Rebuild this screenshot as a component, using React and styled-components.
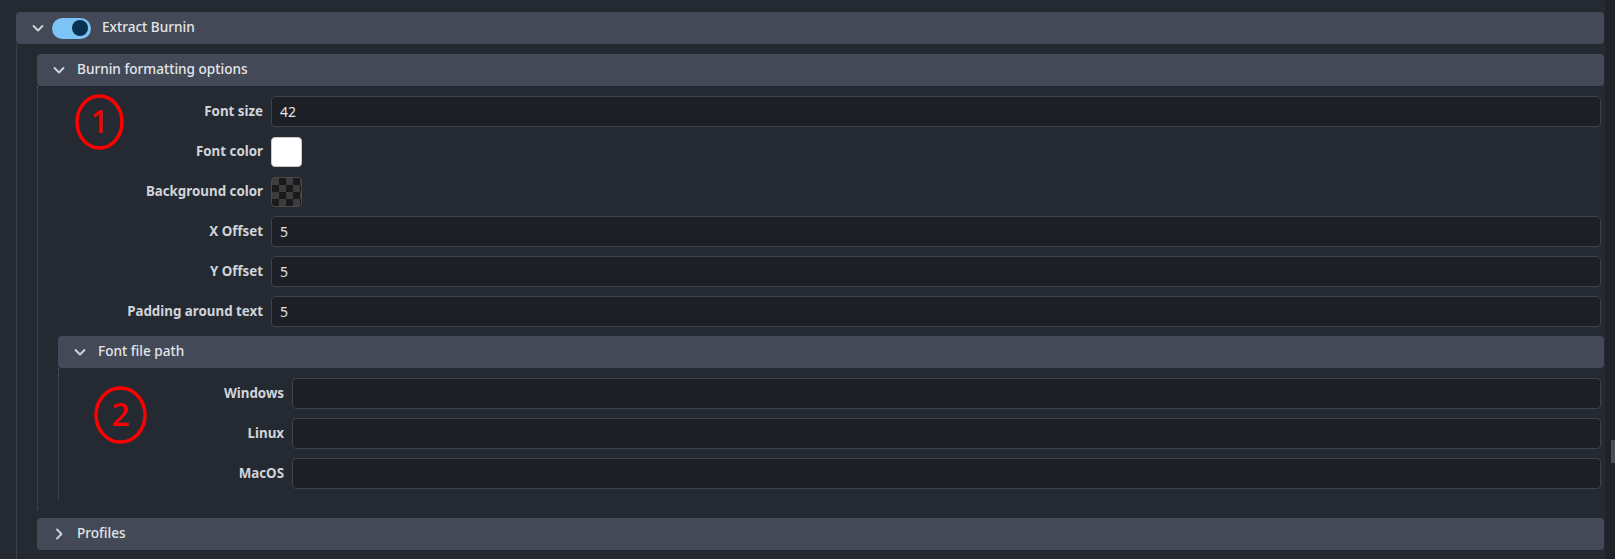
import styled, { createGlobalStyle } from 'styled-components'

const GlobalStyle = createGlobalStyle`
    html, body {
        margin: 0;
        padding: 0;
        background: #252a32;
        overflow: hidden;
    }
    body {
        font-family: "Noto Sans", "Open Sans", sans-serif;
        color: #d2d6dc;
    }
`

const Page = styled.div`
    display: flex;
    width: 1615px;
    height: 559px;
    overflow: hidden;
`

const Main = styled.div`
    flex: 1;
    padding: 12px 1px 0 16px;
    display: flex;
    flex-direction: column;
`

const ScrollTrack = styled.div`
    width: 10px;
    background: #1f2329;
    display: flex;
    justify-content: flex-end;
`

const ScrollThumb = styled.div`
    width: 4px;
    height: 23px;
    margin-top: 440px;
    background: #4a4d52;
`

const Section = styled.div`
    display: flex;
    flex-direction: column;
    flex: ${(p) => (p.$grow ? 1 : 'none')};
`

const Header = styled.div`
    height: 32px;
    box-sizing: border-box;
    display: flex;
    align-items: center;
    padding-left: 16px;
    background: #434956;
    border-radius: 4px;
    flex: none;
`

const Title = styled.span`
    color: #e4e6ea;
    font-size: 13.6px;
    font-weight: 500;
    margin-bottom: 4px;
`

const ChevronBox = styled.svg`
    width: 12px;
    height: 12px;
    margin-right: ${(p) => (p.$tight ? '8px' : '12px')};
    flex: none;
`

const Toggle = styled.div`
    width: 39px;
    height: 21px;
    border-radius: 11px;
    background: #7cc3f7;
    display: flex;
    align-items: center;
    justify-content: flex-end;
    padding-right: 3px;
    box-sizing: border-box;
    margin-right: 11px;
    &::after {
        content: '';
        width: 16px;
        height: 16px;
        border-radius: 50%;
        background: #08304f;
    }
`

const Body = styled.div`
    position: relative;
    border-left: 1px dotted #525864;
    padding: ${(p) => p.$pad || '10px 0 10px 20px'};
    display: flex;
    flex-direction: column;
    gap: ${(p) => p.$gap || '0'};
    flex: ${(p) => (p.$grow ? 1 : 'none')};
`

const Form = styled.div`
    display: grid;
    grid-template-columns: 225px 1fr;
    column-gap: 8px;
    row-gap: 9px;
    padding-right: 3px;
    margin-left: ${(p) => (p.$outdent ? '-20px' : '0')};
`

const Label = styled.div`
    height: 31px;
    display: flex;
    align-items: center;
    justify-content: flex-end;
    font-size: 13.33px;
    font-weight: 700;
    color: #d0d4da;
    padding-bottom: 1px;
    box-sizing: border-box;
`

const Input = styled.div`
    height: 31px;
    box-sizing: border-box;
    background: #1c1f26;
    border: 1px solid #3d424c;
    border-radius: 4px;
    display: flex;
    align-items: center;
    padding: 0 0 1px 8px;
    font-size: 14px;
    color: #e2e4e8;
`

const Swatch = styled.div`
    width: 31px;
    height: 30px;
    box-sizing: border-box;
    align-self: center;
    border-radius: 4px;
    border: 1px solid ${(p) => (p.$checker ? '#4a4a4a' : '#c9c9c9')};
    background: ${(p) =>
        p.$checker
            ? 'repeating-conic-gradient(#1a1a1a 0 25%, #3d3d3d 0 50%) 0 0 / 14px 14px'
            : '#ffffff'};
`

const Annotation = styled.div`
    position: absolute;
    left: ${(p) => p.$x}px;
    top: ${(p) => p.$y}px;
    width: ${(p) => p.$w}px;
    height: ${(p) => p.$h}px;
    display: flex;
    align-items: center;
    justify-content: center;
    color: #ff0000;
    font-family: "Noto Sans", sans-serif;
    font-size: 32px;
    font-weight: 500;
    line-height: 1;
    svg {
        position: absolute;
        inset: 0;
    }
    span {
        position: relative;
        margin-top: -2px;
    }
`

function Chevron({ open, tight }) {
    return (
        <ChevronBox viewBox="0 0 12 12" $tight={tight}>
            <path
                d={open ? 'M1.5 4 L6 8.5 L10.5 4' : 'M4 1.5 L8.5 6 L4 10.5'}
                fill="none"
                stroke="#d4d7dc"
                strokeWidth="1.8"
                strokeLinecap="round"
                strokeLinejoin="round"
            />
        </ChevronBox>
    )
}

function Marker({ n, x, y, w, h }) {
    return (
        <Annotation $x={x} $y={y} $w={w} $h={h}>
            <svg width={w} height={h}>
                <ellipse
                    cx={w / 2}
                    cy={h / 2}
                    rx={w / 2 - 2}
                    ry={h / 2 - 2}
                    fill="none"
                    stroke="#ff0000"
                    strokeWidth="3.5"
                />
            </svg>
            <span>{n}</span>
        </Annotation>
    )
}

function Field({ label, value }) {
    return (
        <>
            <Label>{label}</Label>
            <Input>{value}</Input>
        </>
    )
}

export default function App() {
    return (
        <Page>
            <GlobalStyle />
            <Main>
                <Section $grow>
                    <Header>
                        <Chevron open tight />
                        <Toggle />
                        <Title>Extract Burnin</Title>
                    </Header>
                    <Body $grow $pad="10px 0 0 20px" $gap="8px">
                        <Section>
                            <Header>
                                <Chevron open />
                                <Title>Burnin formatting options</Title>
                            </Header>
                            <Body $pad="10px 0 10px 20px" $gap="9px">
                                <Marker n="1" x={37} y={8} w={49} h={56} />
                                <Form $outdent>
                                    <Field label="Font size" value="42" />
                                    <Label>Font color</Label>
                                    <Swatch />
                                    <Label>Background color</Label>
                                    <Swatch $checker />
                                    <Field label="X Offset" value="5" />
                                    <Field label="Y Offset" value="5" />
                                    <Field label="Padding around text" value="5" />
                                </Form>
                                <Section>
                                    <Header>
                                        <Chevron open />
                                        <Title>Font file path</Title>
                                    </Header>
                                    <Body $pad="10px 0 11px 0">
                                        <Marker n="2" x={35} y={18} w={53} h={58} />
                                        <Form>
                                            <Field label="Windows" />
                                            <Field label="Linux" />
                                            <Field label="MacOS" />
                                        </Form>
                                    </Body>
                                </Section>
                            </Body>
                        </Section>
                        <Section>
                            <Header>
                                <Chevron />
                                <Title>Profiles</Title>
                            </Header>
                        </Section>
                    </Body>
                </Section>
            </Main>
            <ScrollTrack>
                <ScrollThumb />
            </ScrollTrack>
        </Page>
    )
}
